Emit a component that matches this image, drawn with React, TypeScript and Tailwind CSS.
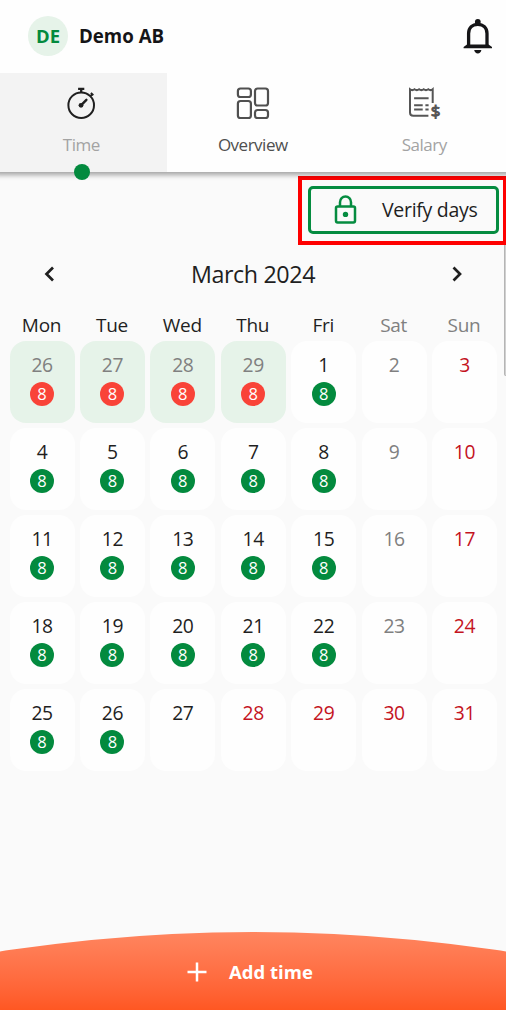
import React from 'react';
import { clsx } from 'clsx';

interface Day {
  label: number;
  hours?: number;
  kind?: 'outside' | 'weekend' | 'holiday';
}

const weekdays = ['Mon', 'Tue', 'Wed', 'Thu', 'Fri', 'Sat', 'Sun'];

const lastMonth: Day[] = [26, 27, 28, 29].map((label) => ({ label, hours: 8, kind: 'outside' }));

const march: Day[] = Array.from({ length: 31 }, (_, i) => {
  const label = i + 1;
  const column = (i + 4) % 7;
  if (column === 6 || label >= 28) return { label, kind: 'holiday' };
  if (column === 5) return { label, kind: 'weekend' };
  return { label, hours: label <= 26 ? 8 : undefined };
});

const days = [...lastMonth, ...march];

function BellIcon() {
  return (
    <svg width="30" height="36" viewBox="0 0 30 36" fill="#151517">
      <circle cx="14.8" cy="3.8" r="2.9" />
      <path
        d="M5.6 28V15.5C5.6 9.8 9.5 6.3 14.8 6.3S24 9.8 24 15.5V28"
        fill="none"
        stroke="#151517"
        strokeWidth="3.3"
      />
      <path d="M4 26.6h21.6l3.4 2.5v1.1H.6v-1.1z" />
      <path d="M11.2 32h7.2c-.4 2.2-1.8 3.5-3.6 3.5s-3.2-1.3-3.6-3.5z" />
    </svg>
  );
}

function StopwatchIcon() {
  return (
    <svg width="32" height="34" viewBox="0 0 32 34" fill="none" stroke="#1f1f1f" strokeWidth="2">
      <circle cx="16.2" cy="18.2" r="12.8" />
      <path d="M13.1 1.8h6.2M16.2 2v3.5" strokeWidth="2.3" />
      <path d="M25 9.5l2.4-2.4M25.9 5.9l2.4 2.3" strokeWidth="1.9" />
      <path d="M16.2 18.1l5.2-5.3" strokeWidth="2.4" strokeLinecap="round" />
      <circle cx="16" cy="18.3" r="2.4" fill="#1f1f1f" stroke="none" />
    </svg>
  );
}

function OverviewIcon() {
  return (
    <svg width="34" height="34" viewBox="0 0 34 34" fill="none" stroke="#505050" strokeWidth="2.2">
      <rect x="1.9" y="1.5" width="13" height="8.5" rx="2.6" />
      <rect x="1.9" y="14" width="13" height="17" rx="2.6" />
      <rect x="19" y="1.5" width="13" height="17" rx="2.6" />
      <rect x="19" y="23" width="13" height="8" rx="2.6" />
    </svg>
  );
}

function SalaryIcon() {
  return (
    <svg width="34" height="34" viewBox="0 0 34 34" fill="none" stroke="#555" strokeWidth="2">
      <path d="M21.4 28.8H6.3Q3 28.800 3 25.500V2.200q2.300 1.800 4.500 0q2.300 1.800 4.600 0q2.300 1.800 4.600 0q2.300 1.800 4.600 0q2.200 1.800 4.400 0V16" />
      <path d="M7.100 11.200h14.500M7.100 18.200h8.600M7.100 22.500h8.600" strokeWidth="2.100" />
      <path d="M18.400 18.200h3.200M18.400 22.500h3.200" strokeWidth="2.100" />
      <text
        x="28.400"
        y="29.600"
        textAnchor="middle"
        className="font-['Noto_Sans',sans-serif] text-[17px]"
        fill="#555"
        stroke="#555"
        strokeWidth="0.900"
      >
        $
      </text>
    </svg>
  );
}

function LockIcon() {
  return (
    <svg width="24" height="30" viewBox="0 0 24 30" fill="none" stroke="#058c40" strokeWidth="2.5">
      <rect x="2" y="11.4" width="19" height="16" rx="1.6" />
      <path d="M6 11V7.2a5.500 5.600 0 0 1 11 0V11" />
      <circle cx="11.5" cy="19.400" r="2.700" fill="#058c40" stroke="none" />
    </svg>
  );
}

function Chevron({ d }: { d: string }) {
  return (
    <svg width="12" height="18" viewBox="0 0 12 18" fill="none" stroke="#1f1f1f" strokeWidth="2.7">
      <path d={d} />
    </svg>
  );
}

interface TabProps {
  label: string;
  icon: React.ReactNode;
  active?: boolean;
  muted?: boolean;
}

function Tab({ label, icon, active, muted }: TabProps) {
  return (
    <button
      className={clsx(
        'relative flex flex-1 flex-col items-center pt-[14px] text-[17px] tracking-[-0.5px]',
        active ? 'bg-[#f3f3f3]' : 'bg-[#fefefe]',
        muted ? 'text-[#a3a3a3]' : 'text-[#4f4f4f]',
      )}
    >
      {icon}
      <span className="mt-3 leading-6">{label}</span>
      {active && <span className="absolute -bottom-2 ml-px size-4 rounded-full bg-[#038a3e]" />}
    </button>
  );
}

function DayCell({ label, hours, kind }: Day) {
  return (
    <div
      className={clsx(
        'flex h-[81.5px] flex-col items-center rounded-[16px] pt-[10px]',
        kind === 'outside' ? 'bg-[#e6f3e9]' : 'bg-[#fefefe]',
      )}
    >
      <span
        className={clsx(
          'text-[19.3px] leading-[27px] tracking-[-0.4px]',
          !kind && 'text-[#1f1f1f]',
          (kind === 'outside' || kind === 'weekend') && 'text-[#808080]',
          kind === 'holiday' && 'text-[#c4141f]',
        )}
      >
        {label}
      </span>
      {hours && (
        <span
          className={clsx(
            'mt-[4px] flex size-6 items-center justify-center rounded-full text-[16.5px] leading-none text-white',
            kind === 'outside' ? 'bg-[#f94338]' : 'bg-[#038a3e]',
          )}
        >
          {hours}
        </span>
      )}
    </div>
  );
}

export default function App() {
  return (
    <div className="relative flex h-[1010px] w-[506px] flex-col overflow-hidden bg-[#fafafa] font-['Open_Sans',sans-serif] text-[#1f1f1f]">
      <header className="relative z-20 flex h-[73px] shrink-0 items-start bg-[#fefefe] pt-4 pr-[13px] pl-7">
        <div className="flex size-10 items-center justify-center rounded-full bg-[#e6f3e9] text-[18.5px] font-bold text-[#038a3e]">
          DE
        </div>
        <span className="ml-[11px] text-[18.7px] leading-10 font-bold text-[#151517]">Demo AB</span>
        <button className="mt-[2px] ml-auto">
          <BellIcon />
        </button>
      </header>

      <nav className="z-10 -mr-[4px] -ml-[4.5px] flex h-[99px] shrink-0 shadow-[0_2px_5px_1px_rgba(0,0,0,0.35)]">
        <Tab label="Time" icon={<StopwatchIcon />} active muted />
        <Tab label="Overview" icon={<OverviewIcon />} />
        <Tab label="Salary" icon={<SalaryIcon />} muted />
      </nav>

      <main className="flex flex-1 flex-col">
        <div className="mt-1 ml-auto h-[69px] w-[208px] shrink-0 border-4 border-r-[3px] border-[#fe0000] pt-[6px] pl-[6px]">
          <button className="flex h-[48px] w-[191px] items-center rounded-[5px] border-[3px] border-[#058c40] pl-[23px]">
            <LockIcon />
            <span className="ml-[24px] text-[19.5px] tracking-[-0.3px] whitespace-nowrap">Verify days</span>
          </button>
        </div>

        <div className="mt-3 flex h-[34px] items-center justify-between pr-[43px] pl-[43px]">
          <button>
            <Chevron d="M10 2.5L3.5 9l6.5 6.5" />
          </button>
          <h1 className="text-[23.3px] tracking-[-0.4px]">March 2024</h1>
          <button>
            <Chevron d="M2.5 2.5L9 9l-6.5 6.5" />
          </button>
        </div>

        <div className="mt-[21px] grid grid-cols-7 gap-x-[5.4px] pr-[9.5px] pl-[9px] text-center text-[19px] leading-[26px] tracking-[-0.3px]">
          {weekdays.map((day, i) => (
            <span key={day} className={i > 4 ? 'text-[#808080]' : ''}>
              {day}
            </span>
          ))}
        </div>

        <div className="mt-[3px] grid grid-cols-7 gap-x-[5.4px] gap-y-[5.5px] pr-[9px] pl-[9.5px]">
          {days.map((day, i) => (
            <DayCell key={i} {...day} />
          ))}
        </div>
      </main>

      {/* scroll thumb */}
      <div className="absolute top-[245px] -right-[2px] h-[131px] w-1 rounded-b-full border border-t-0 border-[#b5b5b5] bg-[#d0d0d0]" />

      <button className="flex h-[78px] shrink-0 items-center justify-center bg-linear-to-b from-[#ff855f] to-[#ff5722] pt-[2px] pr-[6px] text-white [clip-path:circle(1650px_at_50%_1650px)]">
        <svg width="20" height="20" viewBox="0 0 20 20" fill="none" stroke="currentColor" strokeWidth="2.5">
          <path d="M10 .5v19M.5 10h19" />
        </svg>
        <span className="ml-[22px] text-[18.5px] font-bold">Add time</span>
      </button>
    </div>
  );
}
